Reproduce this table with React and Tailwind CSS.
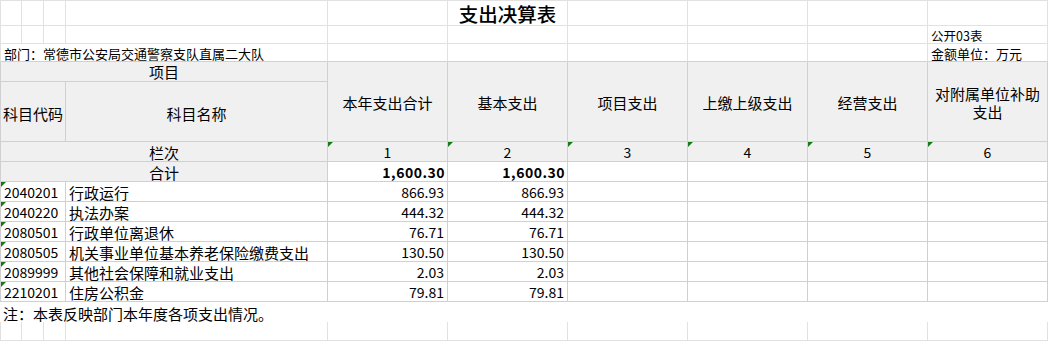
import React from "react";

const LG = "border-r border-b border-[#e1e1e1]";
const LGL = "border-l border-r border-b border-[#e1e1e1]";
const TB = "border-r border-b border-[#d0d0d0]";
const TBL = "border-l border-r border-b border-[#d0d0d0]";

function Tri() {
  return (
    <span className="absolute left-0 top-0 w-0 h-0 border-t-[5px] border-r-[5px] border-t-[#157a15] border-r-transparent" />
  );
}

const rows = [
  ["2040201", "行政运行", "866.93"],
  ["2040220", "执法办案", "444.32"],
  ["2080501", "行政单位离退休", "76.71"],
  ["2080505", "机关事业单位基本养老保险缴费支出", "130.50"],
  ["2089999", "其他社会保障和就业支出", "2.03"],
  ["2210201", "住房公积金", "79.81"],
];

const heads = ["本年支出合计", "基本支出", "项目支出", "上缴上级支出", "经营支出"];

export default function App() {
  const blanks = (n, first) =>
    Array.from({ length: n }).map((_, i) => (
      <div key={i} className={i === 0 && first ? LGL : LG} />
    ));

  return (
    <div className="w-[1049px] h-[341px] bg-white overflow-hidden text-black font-['Noto_Sans_CJK_SC','Noto_Sans',sans-serif]">
      <div className="grid grid-cols-[22px_22px_22px_262px_repeat(6,120px)] grid-rows-[26px_18px_18px_20px_60px_20px_20px_20px_20px_20px_20px_20px_20px_20px_19px]">
        {/* Row 1 */}
        <div className="border-l border-t border-r border-b border-[#e1e1e1]" />
        <div className="border-t border-r border-b border-[#e1e1e1]" />
        <div className="border-t border-r border-b border-[#e1e1e1]" />
        <div className="border-t border-r border-b border-[#e1e1e1]" />
        <div className="border-t border-r border-b border-[#e1e1e1]" />
        <div className="border-t border-r border-b border-[#e1e1e1] flex items-center justify-center pt-[1px]">
          <span className="text-[19.5px] leading-[22px] font-medium whitespace-nowrap">支出决算表</span>
        </div>
        <div className="border-t border-r border-b border-[#e1e1e1]" />
        <div className="border-t border-r border-b border-[#e1e1e1]" />
        <div className="border-t border-r border-b border-[#e1e1e1]" />
        <div className="border-t border-r border-b border-[#e1e1e1]" />

        {/* Row 2 */}
        {blanks(9, true)}
        <div className={LG + " flex items-end pl-[3px] pb-[1px] text-[12.5px] leading-[13px] whitespace-nowrap"}>公开03表</div>

        {/* Row 3 */}
        <div className="col-span-4 border-l border-r border-b border-l-[#e1e1e1] border-r-[#e1e1e1] border-b-[#d0d0d0] flex items-end pl-[3px] pb-[1px] text-[13px] leading-[13px] whitespace-nowrap">
          部门：常德市公安局交通警察支队直属二大队
        </div>
        <div className="border-r border-b border-r-[#e1e1e1] border-b-[#d0d0d0]" />
        <div className="border-r border-b border-r-[#e1e1e1] border-b-[#d0d0d0]" />
        <div className="border-r border-b border-r-[#e1e1e1] border-b-[#d0d0d0]" />
        <div className="border-r border-b border-r-[#e1e1e1] border-b-[#d0d0d0]" />
        <div className="border-r border-b border-r-[#e1e1e1] border-b-[#d0d0d0]" />
        <div className="border-r border-b border-r-[#e1e1e1] border-b-[#d0d0d0] flex items-end pl-[3px] pb-[1px] text-[13px] leading-[13px] whitespace-nowrap">
          金额单位：万元
        </div>

        {/* Row 4 header */}
        <div className={"col-span-4 bg-[#f0f0f0] flex items-end justify-center pb-[2px] text-[15px] leading-[15px] " + TBL}>项目</div>
        {heads.map((h) => (
          <div key={h} className={"row-span-2 bg-[#f0f0f0] flex items-center justify-center pt-[2px] text-[15px] leading-[15px] " + TB}>
            {h}
          </div>
        ))}
        <div className={"row-span-2 bg-[#f0f0f0] flex flex-col items-center justify-center pt-[3px] text-[15px] leading-[18px] text-center " + TB}>
          <span className="block">对附属单位补助</span>
          <span className="block">支出</span>
        </div>

        {/* Row 5 */}
        <div className={"col-span-3 bg-[#f0f0f0] flex items-center justify-center pt-[3px] text-[15px] leading-[15px] " + TBL}>科目代码</div>
        <div className={"bg-[#f0f0f0] flex items-center justify-center pt-[3px] text-[15px] leading-[15px] " + TB}>科目名称</div>

        {/* Row 6 栏次 */}
        <div className={"col-span-4 bg-[#f0f0f0] flex items-end justify-center pb-[1px] text-[15px] leading-[15px] " + TBL}>栏次</div>
        {["1", "2", "3", "4", "5", "6"].map((n) => (
          <div key={n} className={"relative bg-[#f0f0f0] flex items-end justify-center pb-[2px] text-[14px] leading-[14px] " + TB}>
            <Tri />
            {n}
          </div>
        ))}

        {/* Row 7 合计 */}
        <div className={"col-span-4 bg-[#f0f0f0] flex items-end justify-center pb-[1px] text-[15px] leading-[15px] " + TBL}>合计</div>
        <div className={"flex items-end justify-end pr-[2px] pb-[2px] text-[14px] leading-[14px] font-bold tracking-[0.5px] " + TB}>1,600.30</div>
        <div className={"flex items-end justify-end pr-[2px] pb-[2px] text-[14px] leading-[14px] font-bold tracking-[0.5px] " + TB}>1,600.30</div>
        <div className={TB} />
        <div className={TB} />
        <div className={TB} />
        <div className={TB} />

        {/* Data rows */}
        {rows.map(([code, name, v]) => (
          <React.Fragment key={code}>
            <div className={"relative col-span-3 flex items-end pl-[3px] pb-[2px] text-[14px] leading-[14px] " + TBL}>
              <Tri />
              {code}
            </div>
            <div className={"flex items-end pl-[3px] pb-[1px] text-[15px] leading-[15px] whitespace-nowrap " + TB}>{name}</div>
            <div className={"flex items-end justify-end pr-[3px] pb-[2px] text-[14px] leading-[14px] " + TB}>{v}</div>
            <div className={"flex items-end justify-end pr-[3px] pb-[2px] text-[14px] leading-[14px] " + TB}>{v}</div>
            <div className={TB} />
            <div className={TB} />
            <div className={TB} />
            <div className={TB} />
          </React.Fragment>
        ))}

        {/* Note row */}
        <div className="col-span-10 flex items-end pl-[3px] pb-[1px] text-[15px] leading-[15px] whitespace-nowrap">
          注：本表反映部门本年度各项支出情况。
        </div>

        {/* Last row */}
        {blanks(10, true)}
      </div>
    </div>
  );
}
